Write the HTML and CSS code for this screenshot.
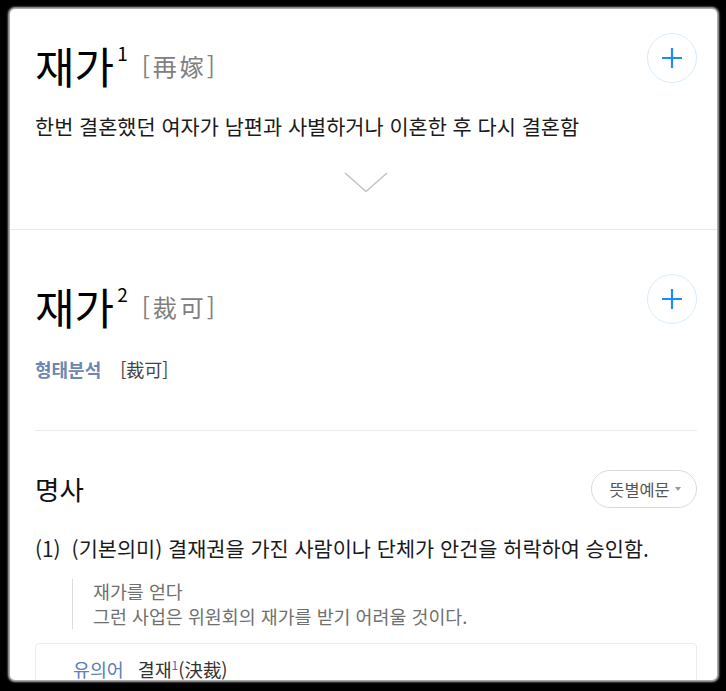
FILE: index.html
```
<!DOCTYPE html>
<html lang="ko">
  <head>
    <meta charset="utf-8">
    <title>재가 - 사전</title>
    <link rel="stylesheet" href="styles.css">
  </head>
  <body>
    <div class="card">
      <!-- 재가 1 -->
      <section class="entry entry-first">
        <div class="entryHead">
          <h2 class="headword">
            <span class="word">재가</span><sup class="homonym">1</sup>
            <span class="hanja">[再嫁]</span>
          </h2>
          <button class="addBtn" aria-label="단어장 추가">
            <svg width="20" height="20" viewBox="0 0 20 20"><path d="M10 0v20M0 10h20" stroke="#1a8cff" stroke-width="2.2" fill="none"/></svg>
          </button>
        </div>
        <p class="summary">한번 결혼했던 여자가 남편과 사별하거나 이혼한 후 다시 결혼함</p>
        <div class="more">
          <svg width="44" height="21" viewBox="0 0 44 21"><polyline points="1,1 22,19.5 43,1" stroke="#c4c4c4" stroke-width="1.6" fill="none"/></svg>
        </div>
      </section>

      <!-- 재가 2 -->
      <section class="entry entry-second">
        <div class="entryHead">
          <h2 class="headword">
            <span class="word">재가</span><sup class="homonym">2</sup>
            <span class="hanja">[裁可]</span>
          </h2>
          <button class="addBtn" aria-label="단어장 추가">
            <svg width="20" height="20" viewBox="0 0 20 20"><path d="M10 0v20M0 10h20" stroke="#1a8cff" stroke-width="2.2" fill="none"/></svg>
          </button>
        </div>
        <div class="morph">
          <span class="morphLabel">형태분석</span>
          <span class="morphValue">[裁可]</span>
        </div>

        <div class="posBlock">
          <div class="posHead">
            <h3 class="pos">명사</h3>
            <button class="pill">뜻별예문<span class="caret"></span></button>
          </div>
          <div class="sense">
            <span class="senseNum">(1)</span>
            <span class="senseText">(기본의미) 결재권을 가진 사람이나 단체가 안건을 허락하여 승인함.</span>
          </div>
          <div class="examples">
            <p>재가를 얻다</p>
            <p>그런 사업은 위원회의 재가를 받기 어려울 것이다.</p>
          </div>
          <div class="related">
            <span class="relatedLabel">유의어</span>
            <span class="relatedWord">결재<sup>1</sup>(決裁)</span>
          </div>
        </div>
      </section>
    </div>
  </body>
</html>
```

FILE: styles.css
```
/* Page */
html, body {
  height: 100%;
}

body {
  margin: 0;
  background: #000;
  font-family: "Noto Sans CJK KR", "Noto Sans", sans-serif;
  color: #111;
}

.card {
  margin: 9px 9px 0 10px;
  height: 671px;
  overflow: hidden;
  background: #fff;
  border-radius: 5px;
  box-shadow: 0 0 2px 2px #b5b5b5;
}

/* Entries */
.entry {
  padding: 0 20px 0 25px;
}

.entry-first {
  padding-top: 24px;
  padding-bottom: 36px;
  border-bottom: 1px solid #e9e9e9;
}

.entry-second {
  padding-top: 44px;
}

.entryHead {
  display: flex;
  justify-content: space-between;
  align-items: flex-start;
}

.headword {
  display: flex;
  align-items: center;
  margin: 7px 0 0;
  height: 50px;
  font-weight: normal;
}

.word {
  font-size: 43px;
  line-height: 50px;
  color: #000;
}

.homonym {
  align-self: flex-start;
  font-size: 19px;
  line-height: 1;
  margin: 3px 0 0 3px;
  color: #000;
}

.hanja {
  margin-left: 14px;
  font-size: 24px;
  letter-spacing: 3px;
  color: #808080;
}

.addBtn {
  width: 50px;
  height: 50px;
  padding: 0;
  border: 1px solid #d7ebfc;
  border-radius: 50%;
  background: #fff;
  display: flex;
  align-items: center;
  justify-content: center;
  cursor: pointer;
}

.summary {
  margin: 22px 0 0;
  font-size: 20.8px;
  line-height: 28px;
  color: #1a1a1a;
}

.more {
  margin-top: 32px;
  display: flex;
  justify-content: center;
}

.more svg {
  display: block;
}

/* Morphology */
.morph {
  margin-top: 26px;
  display: flex;
  gap: 19px;
  font-size: 18px;
  line-height: 24px;
  padding-bottom: 49px;
  border-bottom: 1px solid #ececec;
}

.morphLabel {
  color: #6d87b3;
  font-weight: bold;
}

.morphValue {
  color: #444;
}

/* Part of speech */
.posHead {
  margin-top: 38px;
  display: flex;
  justify-content: space-between;
  align-items: center;
}

.pos {
  margin: 0;
  font-size: 26.5px;
  font-weight: normal;
  color: #111;
}

.pill {
  width: 106px;
  height: 38px;
  border: 1px solid #dadada;
  border-radius: 19px;
  background: #fff;
  font-family: inherit;
  font-size: 16.4px;
  color: #555;
  display: flex;
  align-items: center;
  justify-content: center;
  gap: 5px;
  padding: 0 0 0 2px;
}

.caret {
  width: 0;
  height: 0;
  border-left: 3px solid transparent;
  border-right: 3px solid transparent;
  border-top: 4px solid #999;
}

.sense {
  margin-top: 26px;
  display: flex;
  gap: 11px;
  font-size: 20.8px;
  line-height: 28px;
  color: #1a1a1a;
}

.examples {
  margin: 17px 0 0 37px;
  padding-left: 20px;
  border-left: 1px solid #dcdcdc;
  font-size: 18.4px;
  line-height: 25px;
  color: #707070;
}

.examples p {
  margin: 0;
}

.related {
  margin-top: 14px;
  height: 60px;
  border: 1px solid #ececec;
  border-radius: 4px;
  padding: 12px 0 0 37px;
  display: flex;
  align-items: baseline;
  gap: 14px;
  font-size: 18.4px;
  line-height: 26px;
}

.relatedLabel {
  color: #5c80b8;
}

.relatedWord {
  color: #333;
}

.relatedWord sup {
  font-size: 12px;
  line-height: 0;
  color: #3d6fc0;
}
```
